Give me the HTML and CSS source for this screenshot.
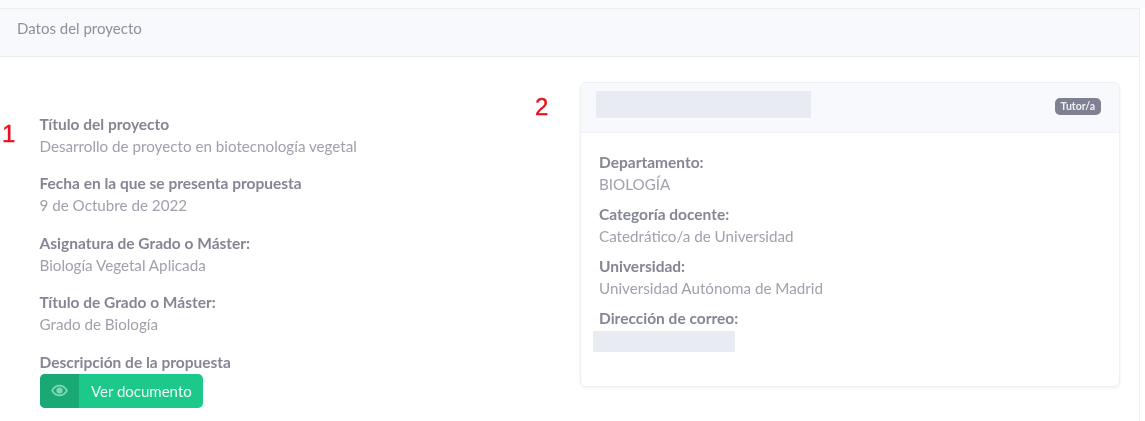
FILE: index.html
```html
<!DOCTYPE html>
<html lang="es">
<head>
<meta charset="utf-8">
<title>Datos del proyecto</title>
<link rel="stylesheet" href="styles.css">
</head>
<body>
<section class="panel">
  <header class="panel-head">Datos del proyecto</header>
  <div class="panel-body">
    <div class="col-left">
      <span class="mark mark-one">1</span>
      <dl class="fields">
        <div class="field"><dt>Título del proyecto</dt><dd>Desarrollo de proyecto en biotecnología vegetal</dd></div>
        <div class="field"><dt>Fecha en la que se presenta propuesta</dt><dd>9 de Octubre de 2022</dd></div>
        <div class="field"><dt>Asignatura de Grado o Máster:</dt><dd>Biología Vegetal Aplicada</dd></div>
        <div class="field"><dt>Título de Grado o Máster:</dt><dd>Grado de Biología</dd></div>
        <div class="field field-last"><dt>Descripción de la propuesta</dt>
          <dd>
            <a class="btn" href="#">
              <span class="btn-icon">
                <svg width="17" height="17" viewBox="0 0 24 24" fill="none" stroke="currentColor" stroke-width="2.4" stroke-linecap="round" stroke-linejoin="round"><path d="M1.5 12S5.5 5 12 5s10.500 7 10.500 7-4 7-10.500 7S1.500 12 1.500 12z"/><circle cx="12" cy="12" r="3.200" fill="currentColor"/></svg>
              </span>
              <span class="btn-label">Ver documento</span>
            </a>
          </dd>
        </div>
      </dl>
    </div>
    <div class="col-right">
      <span class="mark mark-two">2</span>
      <article class="tutor">
        <header class="tutor-head">
          <span class="redact redact-name"></span>
          <span class="badge">Tutor/a</span>
        </header>
        <dl class="tutor-body">
          <div class="tfield"><dt>Departamento:</dt><dd>BIOLOGÍA</dd></div>
          <div class="tfield"><dt>Categoría docente:</dt><dd>Catedrático/a de Universidad</dd></div>
          <div class="tfield"><dt>Universidad:</dt><dd>Universidad Autónoma de Madrid</dd></div>
          <div class="tfield tfield-mail"><dt>Dirección de correo:</dt><dd><span class="redact redact-mail"></span></dd></div>
        </dl>
      </article>
    </div>
  </div>
</section>
</body>
</html>
```

FILE: styles.css
```css
* { box-sizing: border-box; }
html, body { height: 100%; }
body {
  margin: 0;
  padding: 8px 5px 0 0;
  background: linear-gradient(#fafbfc 8px, #fff 8px);
  font-family: "Lato", "Noto Sans", sans-serif;
  font-size: 15.2px;
  color: #a0a1ac;
  overflow: hidden;
}
.panel {
  height: 100%;
  background: #fff;
  border-top: 1px solid #eceef3;
  border-right: 1px solid #eef0f4;
  filter: blur(0.35px);
}
.panel-head {
  height: 48px;
  padding: 9px 17px 0;
  background: #f8f9fc;
  border-bottom: 1px solid #e9ebf1;
  color: #8e8f9b;
  font-size: 15px;
  line-height: 20px;
}
.panel-body {
  display: flex;
  padding-top: 25px;
}
.col-left {
  position: relative;
  width: 580px;
  padding: 31.6px 0 0 39.5px;
  flex: none;
}
.col-right {
  position: relative;
  flex: none;
  width: 540px;
}
.mark {
  position: absolute;
  color: #e8121c;
  font-family: "Liberation Sans", sans-serif;
  font-size: 24px;
  line-height: 28px;
  -webkit-text-stroke: 0.4px #e8121c;
}
.mark-one { left: 2px; top: 38px; }
.mark-two { left: -45px; top: 11px; }
dl, dd, dt { margin: 0; }
dt {
  font-weight: 700;
  font-size: 15.5px;
  color: #858694;
  line-height: 20px;
}
dd { line-height: 20px; margin-top: 2px; }
.field { margin-bottom: 17.6px; }
.field-last { margin-bottom: 0; }
.field-last dd { margin-top: 2px; }
.btn {
  display: inline-flex;
  height: 34px;
  width: 163px;
  margin-left: 0.5px;
  border-radius: 5px;
  overflow: hidden;
  background: #1cc88a;
  color: #e9fbf4;
  text-decoration: none;
  line-height: 34px;
}
.btn-icon {
  width: 39px;
  display: flex;
  align-items: center;
  justify-content: center;
  background: #19a974;
  color: #7fd8b6;
}
.btn-label { padding-left: 12px; white-space: nowrap; font-size: 15px; }
.tutor {
  height: 305px;
  border: 1px solid #eef0f4;
  border-radius: 6px;
  box-shadow: 0 1px 3px rgba(60, 70, 100, 0.08);
  background: #fff;
}
.tutor-head {
  height: 50px;
  display: flex;
  align-items: center;
  justify-content: space-between;
  padding: 0 18px 2px 15px;
  background: #f8f9fc;
  border-bottom: 1px solid #f0f1f6;
  border-radius: 6px 6px 0 0;
}
.redact { display: block; background: #e8ebf2; }
.redact-name { width: 215px; height: 27px; margin-top: -4px; }
.redact-mail { width: 142px; height: 21px; margin-left: -6px; }
.badge {
  background: #7f8092;
  color: #eeeff3;
  font-size: 10.5px;
  font-weight: 700;
  line-height: 17px;
  padding: 0 6px;
  border-radius: 5px;
}
.tutor-body { padding: 19px 18px 0; }
.tfield { margin-bottom: 10px; }
.tfield dd { margin-top: 2px; }
.tfield-mail dd { margin-top: 3px; }
```
